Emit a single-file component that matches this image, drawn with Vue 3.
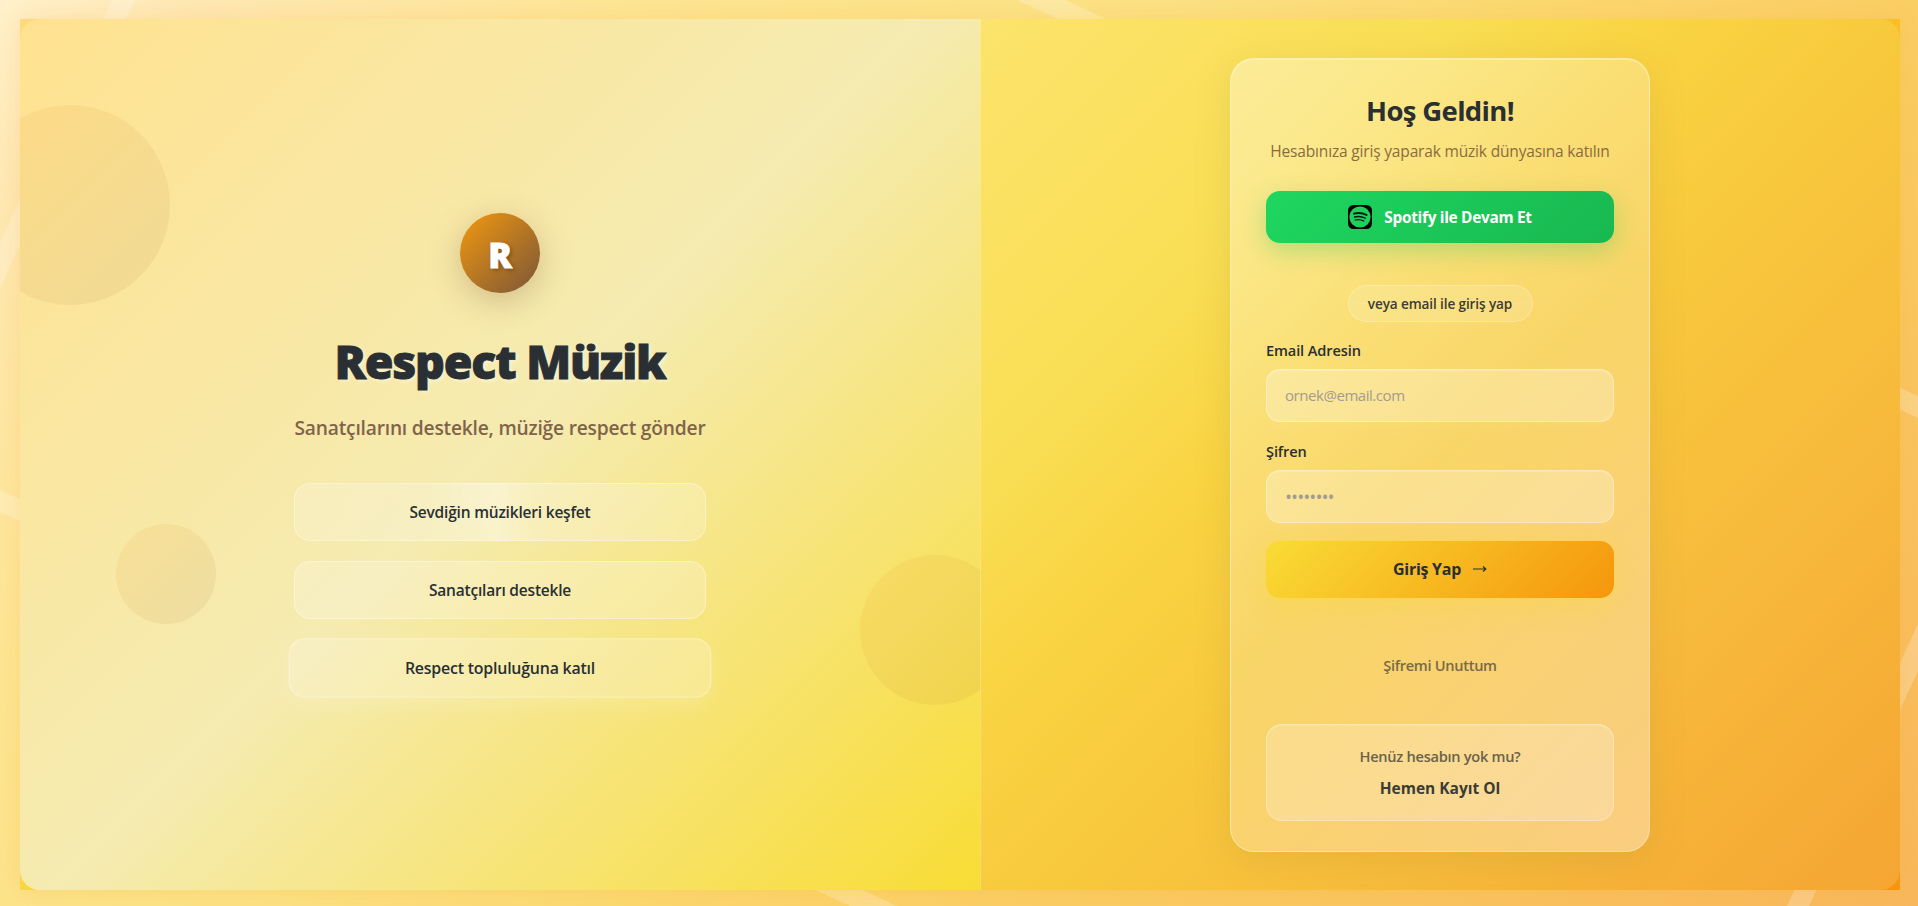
<script setup>
const features = ['Sevdiğin müzikleri keşfet', 'Sanatçıları destekle', 'Respect topluluğuna katıl']
</script>

<template>
  <div class="page">
    <svg class="frame" viewBox="0 0 1918 906" aria-hidden="true">
      <path d="M112 0H135L0 288V243ZM1017 0H1065L1918 396V418ZM0 490 897 906H850L0 512ZM1918 624V671L1809 906H1787Z" />
    </svg>
    <div class="shell">
      <div class="panels">
        <section class="brand">
          <i class="bubble b1"></i>
          <i class="bubble b2"></i>
          <i class="bubble b3"></i>
          <div class="logo">R</div>
          <h1>Respect Müzik</h1>
          <p class="tagline">Sanatçılarını destekle, müziğe respect gönder</p>
          <ul class="features">
            <li v-for="(f, i) in features" :key="f" :class="'f' + i">{{ f }}</li>
          </ul>
        </section>
        <section class="login">
          <form class="card" @submit.prevent>
            <h2>Hoş Geldin!</h2>
            <p class="sub">Hesabınıza giriş yaparak müzik dünyasına katılın</p>
            <button class="spotify" type="button">
              <svg width="24" height="24" viewBox="0 0 24 24" aria-hidden="true">
                <rect width="24" height="24" rx="5.5" fill="#000" />
                <circle cx="12" cy="12" r="10.6" fill="#1ed05c" />
                <g fill="none" stroke="#0a1a10" stroke-linecap="round">
                  <path d="M6 8.7c4.1-1.1 8.8-.7 12.6 1.3" stroke-width="1.9" />
                  <path d="M6.6 12c3.5-.9 7.4-.5 10.6 1.2" stroke-width="1.5" />
                  <path d="M7.1 15c2.9-.7 6.1-.4 8.7 1.1" stroke-width="1.2" />
                </g>
              </svg>
              <span>Spotify ile Devam Et</span>
            </button>
            <div class="divider"><span class="pill">veya email ile giriş yap</span></div>
            <label class="l1">Email Adresin</label>
            <div class="field">ornek@email.com</div>
            <label class="l2">Şifren</label>
            <div class="field dots">••••••••</div>
            <button class="submit" type="submit">
              <span>Giriş Yap</span>
              <svg width="14" height="8" viewBox="0 0 14 8" aria-hidden="true"><path d="M0 4H12.5M10 1.5 12.8 4 10 6.5" /></svg>
            </button>
            <a class="forgot">Şifremi Unuttum</a>
            <div class="signup">
              <p>Henüz hesabın yok mu?</p>
              <a>Hemen Kayıt Ol</a>
            </div>
          </form>
        </section>
      </div>
    </div>
  </div>
</template>

<style>
body { overflow: hidden; }
</style>

<style scoped>
* { box-sizing: border-box; margin: 0; padding: 0; }
.page {
  position: relative;
  width: 1918px;
  height: 906px;
  padding: 19px 18px 16px 20px;
  overflow: hidden;
  font-family: "Open Sans", "Noto Sans", sans-serif;
  color: #292f33;
  background: linear-gradient(135deg, #fff1cc 0%, #fee8b4 7%, #fde592 24%, #fbe182 42%, #fbd76e 56%, #facb60 72%, #f8b75c 100%);
}
.frame { position: absolute; inset: 0; width: 1918px; height: 906px; fill: rgba(255, 255, 255, .24); }
.shell {
  position: relative;
  height: 871px;
  background: linear-gradient(135deg, #ffd97c 0%, #f9d544 33%, #f9c026 67%, #f5960c 100%);
  box-shadow: 0 0 22px rgba(245, 170, 60, .24);
}
.panels { display: flex; height: 871px; border-radius: 20px; overflow: hidden; }
.brand {
  position: relative;
  width: 960px;
  padding-top: 194px;
  overflow: hidden;
  display: flex;
  flex-direction: column;
  align-items: center;
  background: linear-gradient(135deg, #ffe290 0%, #f5ebb0 50%, #f9dc35 100%);
}
.bubble { position: absolute; border-radius: 50%; background: linear-gradient(135deg, rgba(245, 150, 20, .1), rgba(140, 100, 60, .09)); }
.b1 { left: -50px; top: 86px; width: 200px; height: 200px; }
.b2 { left: 96px; top: 505px; width: 100px; height: 100px; }
.b3 { left: 840px; top: 536px; width: 150px; height: 150px; }
.logo {
  position: relative;
  width: 80px;
  height: 80px;
  border-radius: 50%;
  display: flex;
  justify-content: center;
  font-size: 35px;
  line-height: 84px;
  font-weight: 800;
  color: #fff;
  -webkit-text-stroke: .8px #fff;
  text-shadow: 2px 2px 4px rgba(0, 0, 0, .3);
  background: linear-gradient(135deg, #f3990f, #7a5538);
  box-shadow: 0 8px 32px rgba(122, 85, 56, .3);
}
h1 {
  margin-top: 39px;
  font-size: 46.5px;
  line-height: 58px;
  font-weight: 800;
  letter-spacing: -1.22px;
  -webkit-text-stroke: .9px #292f33;
  text-shadow: 2px 2px 4px rgba(255, 255, 255, .5);
}
.tagline { margin-top: 23px; font-size: 19.2px; line-height: 30px; font-weight: 600; letter-spacing: -.2px; color: #80644a; }
.features { position: relative; list-style: none; width: 412px; margin-top: 40px; display: flex; flex-direction: column; gap: 20px; }
.features li {
  height: 58px;
  border: 1px solid rgba(255, 255, 255, .34);
  border-radius: 16px;
  background: rgba(255, 255, 255, .22);
  text-align: center;
  font-size: 15.5px;
  line-height: 56px;
  font-weight: 600;
  letter-spacing: -.2px;
}
.features .f0 { background: linear-gradient(90deg, rgba(255, 255, 255, .2) 0%, rgba(255, 255, 255, .24) 35%, rgba(255, 255, 255, .42) 49%, rgba(255, 255, 255, .26) 58%, rgba(255, 255, 255, .2) 100%); }
.features .f2 { transform: scale(1.026); box-shadow: 0 8px 20px rgba(255, 255, 255, .16); }
.login {
  width: 920px;
  padding: 39px 1px 0 0;
  border-left: 1px solid rgba(255, 255, 255, .25);
  display: flex;
  align-items: flex-start;
  justify-content: center;
  background: linear-gradient(135deg, #fce36c 0%, #f9df55 25%, #f9d443 38%, #f8c83c 53%, #f7b93b 74%, #f5a533 100%) border-box;
}
.card {
  width: 420px;
  height: 794px;
  padding: 34px 35px 0;
  display: flex;
  flex-direction: column;
  border: 1px solid rgba(255, 255, 255, .34);
  border-radius: 24px;
  background: linear-gradient(135deg, rgba(255, 255, 255, .36), rgba(255, 255, 255, .22) 50%, rgba(255, 255, 255, .36));
  box-shadow: 0 8px 36px rgba(150, 130, 50, .17), inset 0 1px 0 rgba(255, 255, 255, .3);
  text-align: center;
}
h2 { font-size: 27.5px; line-height: 36px; height: 34px; font-weight: 700; letter-spacing: -.65px; }
.sub { margin-top: 12px; font-size: 15.5px; line-height: 24px; letter-spacing: -.17px; color: #8a6b40; white-space: nowrap; }
button { font-family: inherit; border: 0; border-radius: 14px; display: flex; align-items: center; justify-content: center; flex: none; }
.spotify {
  margin-top: 28px;
  height: 52px;
  gap: 12px;
  color: #fff;
  font-size: 15.4px;
  font-weight: 700;
  letter-spacing: -.3px;
  background: linear-gradient(135deg, #1ed760, #18b850);
  box-shadow: 0 8px 24px rgba(30, 200, 90, .3);
}
.divider { margin-top: 42px; height: 37px; display: flex; justify-content: center; background: linear-gradient(90deg, transparent 15%, rgba(255, 255, 255, .2), transparent 85%) 0 18px / 100% 1px no-repeat; }
.pill { width: 185px; border: 1px solid rgba(255, 255, 255, .24); border-radius: 19px; background: rgba(255, 255, 255, .14); font-size: 13.6px; line-height: 36px; font-weight: 600; letter-spacing: -.12px; color: #3b3c33; }
label { text-align: left; font-size: 14.6px; line-height: 20px; font-weight: 600; letter-spacing: -.12px; }
.l1 { margin-top: 18px; }
.l2 { margin-top: 19px; }
.field {
  height: 53px;
  flex: none;
  margin-top: 9px;
  padding-left: 18px;
  text-align: left;
  border: 1px solid rgba(255, 255, 255, .35);
  border-radius: 14px;
  background: rgba(255, 255, 255, .27);
  box-shadow: inset 0 1px 0 rgba(255, 255, 255, .2), 0 4px 16px rgba(255, 255, 255, .06);
  font-size: 15px;
  line-height: 51px;
  letter-spacing: -.45px;
  color: #a29c90;
}
.dots { padding-left: 19px; font-size: 13.5px; line-height: 53px; font-weight: 700; letter-spacing: 1px; }
.submit {
  margin-top: 18px;
  height: 57px;
  padding-bottom: 1px;
  gap: 12px;
  color: #292f33;
  font-size: 16px;
  font-weight: 700;
  letter-spacing: -.28px;
  background: linear-gradient(135deg, #f9dc35, #f5960c);
  box-shadow: 0 8px 24px rgba(249, 220, 53, .3);
}
.submit svg { fill: none; stroke: #292f33; stroke-width: 1.2; }
.forgot { margin-top: 57px; font-size: 14.6px; line-height: 20px; font-weight: 600; letter-spacing: -.3px; color: #776a45; }
.signup {
  margin-top: 49px;
  height: 97px;
  padding-top: 20px;
  border: 1px solid rgba(255, 255, 255, .3);
  border-radius: 16px;
  background: rgba(255, 255, 255, .22);
  box-shadow: inset 0 1px 0 rgba(255, 255, 255, .15);
  font-size: 14.6px;
  line-height: 22px;
}
.signup p { color: #6a6249; font-weight: 600; letter-spacing: -.28px; }
.signup a { display: block; margin-top: 10px; font-size: 15.5px; font-weight: 700; color: #3b3c36; }
</style>
